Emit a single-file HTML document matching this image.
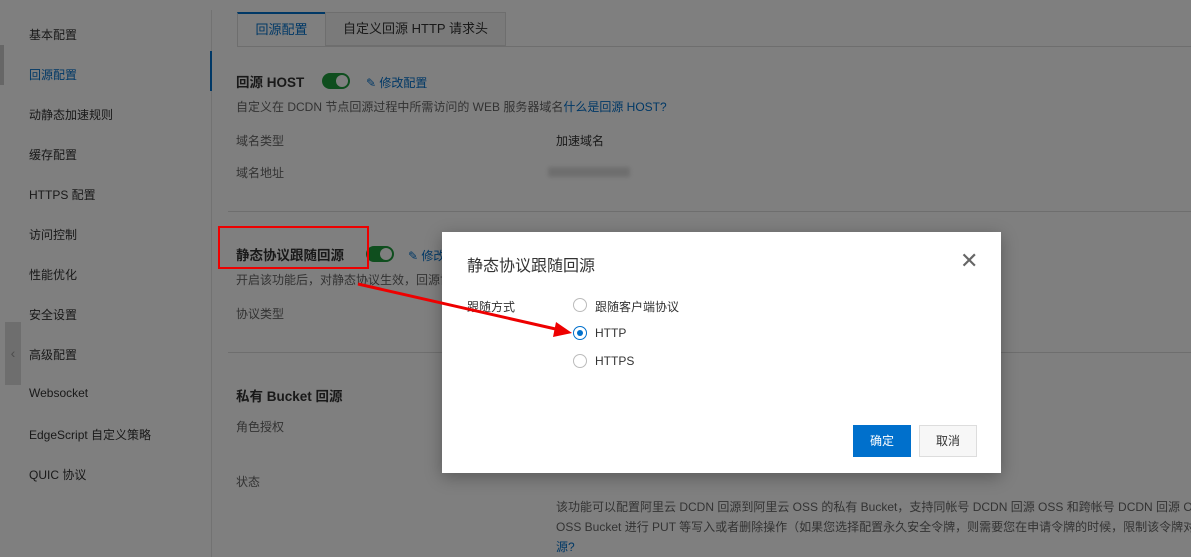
<!DOCTYPE html>
<html><head><meta charset="utf-8"><style>
*{margin:0;padding:0;box-sizing:border-box}
body{width:1191px;height:557px;overflow:hidden;position:relative;background:#fff;font-family:"Liberation Sans","Noto Sans CJK SC",sans-serif;font-size:12px;color:#333}
.a{position:absolute;white-space:nowrap}
.side div{position:absolute;left:29px;font-size:12px;color:#333}
.g{color:#666}
.t{font-size:13.5px;font-weight:bold;color:#333}
.blue{color:#0070cc}
.sw{position:absolute;width:28px;height:16px;border-radius:8px;background:#1e9c3c}
.sw:after{content:"";position:absolute;right:2px;top:2px;width:12px;height:12px;border-radius:50%;background:#fff}
.ov{position:absolute;left:0;top:0;width:1191px;height:557px;background:rgba(0,0,0,0.5)}
.modal{position:absolute;left:442px;top:232px;width:559px;height:241px;background:#fff;box-shadow:0 4px 16px rgba(0,0,0,.3)}
.r{position:absolute;width:14px;height:14px;border-radius:50%;border:1px solid #bbb;background:#fff}
</style></head><body>
<div class="side">
<div style="top:26px">基本配置</div>
<div style="top:66px;color:#0070cc">回源配置</div>
<div style="top:106px">动静态加速规则</div>
<div style="top:146px">缓存配置</div>
<div style="top:186px">HTTPS 配置</div>
<div style="top:226px">访问控制</div>
<div style="top:266px">性能优化</div>
<div style="top:306px">安全设置</div>
<div style="top:346px">高级配置</div>
<div style="top:386px">Websocket</div>
<div style="top:426px">EdgeScript 自定义策略</div>
<div style="top:466px">QUIC 协议</div>
</div>
<div class="a" style="left:0;top:45px;width:4px;height:40px;background:#ccc"></div>
<div class="a" style="left:211px;top:10px;width:1px;height:547px;background:#e5e5e5"></div>
<div class="a" style="left:210px;top:51px;width:2px;height:40px;background:#0070cc"></div>
<div class="a" style="left:5px;top:322px;width:16px;height:63px;background:#ddd;color:#999;font-size:14px;line-height:63px;text-align:center">‹</div>
<div class="a" style="left:237px;top:12px;width:89px;height:35px;border:1px solid #ddd;border-top:2px solid #0070cc;border-bottom:none;background:#fff;color:#0070cc;font-size:13px;text-align:center;line-height:32px">回源配置</div>
<div class="a" style="left:325px;top:12px;width:181px;height:34px;border:1px solid #ddd;background:#f5f5f5;font-size:13px;text-align:center;line-height:32px">自定义回源 HTTP 请求头</div>
<div class="a" style="left:237px;top:46px;width:954px;height:1px;background:#ddd"></div>
<div class="a t" style="left:236px;top:71px">回源 HOST</div>
<div class="sw" style="left:322px;top:73px"></div>
<div class="a blue" style="left:366px;top:74px">✎ 修改配置</div>
<div class="a g" style="left:236px;top:98px">自定义在 DCDN 节点回源过程中所需访问的 WEB 服务器域名<span class="blue">什么是回源 HOST?</span></div>
<div class="a g" style="left:236px;top:132px">域名类型</div>
<div class="a" style="left:556px;top:132px">加速域名</div>
<div class="a g" style="left:236px;top:164px">域名地址</div>
<div class="a" style="left:548px;top:167px;width:82px;height:10px;background:#ddd;filter:blur(2px)"></div>
<div class="a" style="left:228px;top:211px;width:963px;height:1px;background:#ddd"></div>
<div class="a t" style="left:236px;top:244px">静态协议跟随回源</div>
<div class="sw" style="left:366px;top:246px"></div>
<div class="a blue" style="left:408px;top:247px">✎ 修改</div>
<div class="a g" style="left:236px;top:271px">开启该功能后，对静态协议生效，回源协</div>
<div class="a g" style="left:236px;top:305px">协议类型</div>
<div class="a" style="left:228px;top:352px;width:963px;height:1px;background:#ddd"></div>
<div class="a t" style="left:236px;top:385px">私有 Bucket 回源</div>
<div class="a g" style="left:236px;top:418px">角色授权</div>
<div class="a g" style="left:236px;top:473px">状态</div>
<div class="a g" style="left:556px;top:498px">该功能可以配置阿里云 DCDN 回源到阿里云 OSS 的私有 Bucket，支持同帐号 DCDN 回源 OSS 和跨帐号 DCDN 回源 OSS；该</div>
<div class="a g" style="left:556px;top:518px">OSS Bucket 进行 PUT 等写入或者删除操作（如果您选择配置永久安全令牌，则需要您在申请令牌的时候，限制该令牌对 O</div>
<div class="a blue" style="left:556px;top:538px">源?</div>
<div class="ov"></div>
<div class="a" style="left:218px;top:226px;width:151px;height:43px;border:2px solid #e00"></div>
<div class="modal">
<div class="a" style="left:25px;top:20px;font-size:16px;color:#333">静态协议跟随回源</div>
<div class="a" style="left:518px;top:16px;font-size:22px;color:#666;font-weight:300">✕</div>
<div class="a" style="left:25px;top:66px;color:#333">跟随方式</div>
<div class="r" style="left:131px;top:66px"></div>
<div class="a" style="left:153px;top:66px">跟随客户端协议</div>
<div class="r" style="left:131px;top:94px;border-color:#0070cc"><div style="position:absolute;left:3px;top:3px;width:6px;height:6px;border-radius:50%;background:#0070cc"></div></div>
<div class="a" style="left:153px;top:94px">HTTP</div>
<div class="r" style="left:131px;top:122px"></div>
<div class="a" style="left:153px;top:122px">HTTPS</div>
<div class="a" style="left:411px;top:193px;width:58px;height:32px;background:#0070cc;color:#fff;text-align:center;line-height:32px">确定</div>
<div class="a" style="left:477px;top:193px;width:58px;height:32px;background:#f7f7f7;border:1px solid #ddd;text-align:center;line-height:30px">取消</div>
</div>
<svg class="a" style="left:0;top:0" width="1191" height="557"><line x1="358" y1="284" x2="560" y2="330" stroke="#e00" stroke-width="3"/><polygon points="572,333 556,322 553,337" fill="#e00"/></svg>
</body></html>
